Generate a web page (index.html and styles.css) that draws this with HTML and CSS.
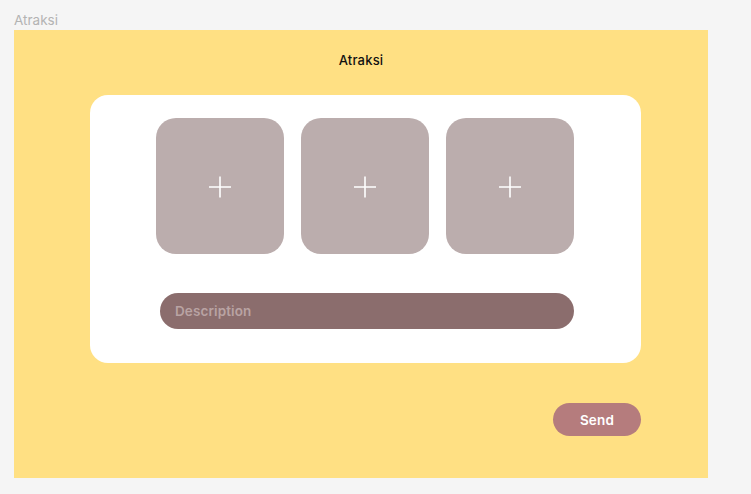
FILE: index.html
```html
<!DOCTYPE html>
<html>
<head>
<meta charset="utf-8">
<link rel="stylesheet" href="styles.css">
</head>
<body>
<div class="frame-label">Atraksi</div>
<div class="frame">
  <div class="title">Atraksi</div>
  <div class="card">
    <div class="tiles">
      <div class="tile"><svg class="plus" width="24" height="24" viewBox="0 0 24 24"><path d="M12 1.5V22.5M1 12H23" stroke="#fff" stroke-width="1.6" fill="none"/></svg></div>
      <div class="tile"><svg class="plus" width="24" height="24" viewBox="0 0 24 24"><path d="M12 1.5V22.5M1 12H23" stroke="#fff" stroke-width="1.6" fill="none"/></svg></div>
      <div class="tile"><svg class="plus" width="24" height="24" viewBox="0 0 24 24"><path d="M12 1.5V22.5M1 12H23" stroke="#fff" stroke-width="1.6" fill="none"/></svg></div>
    </div>
    <div class="desc">Description</div>
  </div>
  <div class="actions">
    <div class="send">Send</div>
  </div>
</div>
</body>
</html>
```
FILE: styles.css
```css
* { box-sizing: border-box; }
html, body { margin: 0; padding: 0; }
body {
  background: #f5f5f5;
  width: 751px;
  height: 494px;
  overflow: hidden;
  font-family: Inter, "Liberation Sans", sans-serif;
}
.frame-label {
  height: 30px;
  padding: 12px 0 0 14px;
  font-size: 13.5px;
  line-height: 16px;
  color: #b3b3b3;
}
.frame {
  margin-left: 14px;
  width: 694px;
  height: 448px;
  background: #ffe083;
  padding: 21px 0 0 76px;
}
.title {
  width: 542px;
  text-align: center;
  font-size: 13px;
  font-weight: 500;
  line-height: 18px;
  color: #111;
  letter-spacing: 0.2px;
}
.card {
  margin-top: 26px;
  width: 551px;
  height: 268px;
  background: #fff;
  border-radius: 18px;
  padding: 23px 0 0 66px;
}
.tiles {
  display: flex;
  gap: 17px;
}
.tile {
  width: 128px;
  height: 136px;
  background: #bbadad;
  border-radius: 20px;
  display: flex;
  align-items: center;
  justify-content: center;
}
.plus { display: block; margin-top: 2px; }
.desc {
  margin-top: 39px;
  margin-left: 4px;
  width: 414px;
  height: 36px;
  border-radius: 18px;
  background: #8b6d6d;
  padding-left: 15px;
  display: flex;
  align-items: center;
  font-size: 13.5px;
  font-weight: 600;
  color: #b9a3a3;
  letter-spacing: 0.1px;
}
.actions {
  width: 551px;
  display: flex;
  justify-content: flex-end;
  margin-top: 40px;
}
.send {
  width: 88px;
  height: 33px;
  border-radius: 17px;
  background: #b57c7d;
  color: #fff;
  font-size: 13.5px;
  font-weight: 600;
  display: flex;
  align-items: center;
  justify-content: center;
  letter-spacing: 0.2px;
}
```
